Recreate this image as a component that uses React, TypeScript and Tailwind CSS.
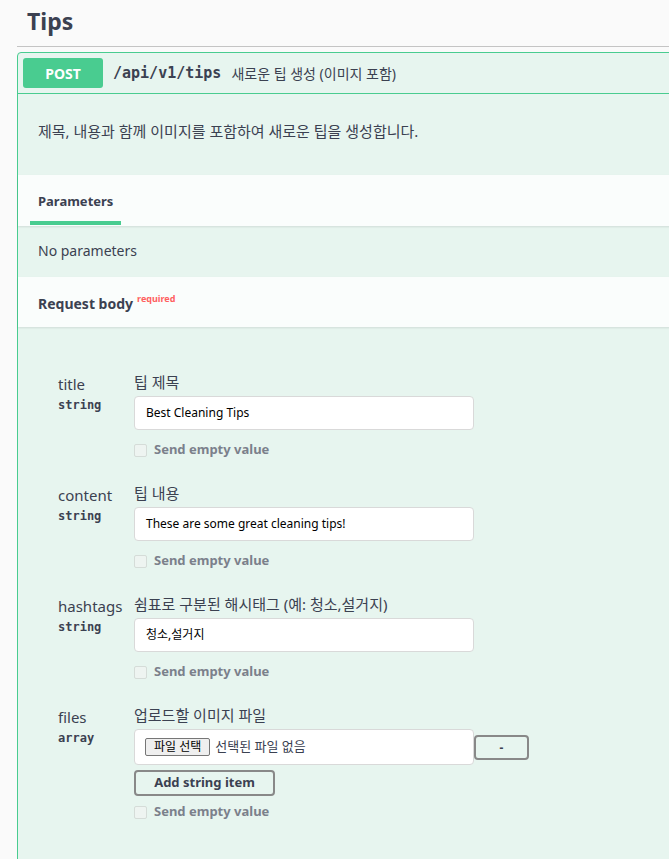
import React from 'react';

const sans = { fontFamily: '"Noto Sans", "Noto Sans CJK KR", sans-serif' };

type Field = {
  name: string;
  type: string;
  label: string;
  value?: string;
  file?: boolean;
};

const fields: Field[] = [
  { name: 'title', type: 'string', label: '팁 제목', value: 'Best Cleaning Tips' },
  { name: 'content', type: 'string', label: '팁 내용', value: 'These are some great cleaning tips!' },
  { name: 'hashtags', type: 'string', label: '쉼표로 구분된 해시태그 (예: 청소,설거지)', value: '청소,설거지' },
  { name: 'files', type: 'array', label: '업로드할 이미지 파일', file: true },
];

function SendEmpty() {
  return (
    <div className="flex items-center h-5 mt-[10px]">
      <span className="w-[13px] h-[13px] rounded-[2px] border border-[#d5dcd8] bg-[#eef4f1]" />
      <span className="ml-[7px] text-[13px] font-bold text-[#7b808b]">Send empty value</span>
    </div>
  );
}

function ParamRow({ f }: { f: Field }) {
  return (
    <div className="flex">
      <div className="w-[76px] pl-[40px] box-content">
        <div className="text-[15px] leading-5 text-[#3b4151]">{f.name}</div>
        <div className="mt-[3px] text-[12px] leading-4 font-bold text-[#3b4151]" style={{ fontFamily: '"DejaVu Sans Mono", monospace' }}>
          {f.type}
        </div>
      </div>
      <div className="flex flex-col">
        <div className="text-[15px] leading-5 text-[#3b4151] -mt-[2px]">{f.label}</div>
        {f.file ? (
          <>
            <div className="flex items-start mt-[4px]">
              <div className="w-[340px] h-[36px] bg-white border border-[#d9d9d9] rounded-[4px] flex items-center pl-[10px]">
                <span className="h-[18px] px-[8px] flex items-center text-[12px] text-black bg-[#efefef] border border-[#767676] rounded-[2px]">
                  파일 선택
                </span>
                <span className="ml-[5px] text-[13px] text-[#3b4151]">선택된 파일 없음</span>
              </div>
              <button className="mt-[6px] w-[55px] h-[25px] border-2 border-[#888] rounded-[4px] text-[12px] font-bold text-[#3b4151] leading-none">
                -
              </button>
            </div>
            <button className="mt-[5px] w-[141px] h-[26px] border-2 border-[#888] rounded-[4px] text-[13px] font-bold text-[#3b4151]">
              Add string item
            </button>
            <div className="-mt-[4px]">
              <SendEmpty />
            </div>
          </>
        ) : (
          <>
            <div className="mt-[4px] w-[340px] h-[34px] bg-white border border-[#d9d9d9] rounded-[4px] flex items-center pl-[11px] text-[12px] text-black">
              {f.value}
            </div>
            <SendEmpty />
          </>
        )}
      </div>
    </div>
  );
}

export default function App() {
  return (
    <div className="w-[669px] h-[859px] overflow-hidden bg-[#fafafa]" style={sans}>
      <div className="ml-[17px] w-[900px]">
        {/* Tag header */}
        <div className="h-[47px] border-b border-[#c4c4c4] pl-[10px] flex items-center">
          <h2 className="text-[23px] font-bold text-[#3b4151] -mt-[3px]">Tips</h2>
        </div>

        {/* Operation block */}
        <div className="mt-[5px] border border-[#49cc90] rounded-[4px] bg-[#e7f5ef] h-[900px]">
          <div className="h-[41px] border-b border-[#49cc90] flex items-center pl-[5px]">
            <span className="w-[80px] h-[30px] rounded-[3px] bg-[#49cc90] text-white text-[14px] font-bold flex items-center justify-center">
              POST
            </span>
            <span
              className="ml-[10px] text-[15px] font-bold text-[#3b4151]"
              style={{ fontFamily: '"DejaVu Sans Mono", monospace' }}
            >
              /api/v1/tips
            </span>
            <span className="ml-[10px] text-[14px] text-[#3b4151]">새로운 팁 생성 (이미지 포함)</span>
          </div>

          <div className="h-[81px] pl-[20px] flex items-center">
            <p className="text-[15px] text-[#3b4151] -mt-[6px]">제목, 내용과 함께 이미지를 포함하여 새로운 팁을 생성합니다.</p>
          </div>

          <div className="h-[51px] bg-[#fafdfc] shadow-[0_1px_2px_rgba(0,0,0,0.1)] flex items-end pl-[12px]">
            <div className="w-[91px] h-[51px] flex flex-col">
              <div className="flex-1 flex items-center pl-[8px] pt-[8px] text-[13px] font-bold text-[#3b4151]">Parameters</div>
              <div className="h-[4px] bg-[#49cc90] mb-[1px]" />
            </div>
          </div>

          <div className="h-[51px] pl-[20px] flex items-center">
            <span className="text-[14px] text-[#3b4151] -mt-[3px]">No parameters</span>
          </div>

          <div className="h-[50px] bg-[#fafdfc] shadow-[0_1px_2px_rgba(0,0,0,0.1)] pl-[20px] flex items-center">
            <span className="text-[14px] font-bold text-[#3b4151] mt-[3px]">Request body</span>
            <span className="ml-[4px] -mt-[6px] text-[9px] font-bold text-[#ff6060]">required</span>
          </div>

          <div className="pt-[47px] flex flex-col gap-[25px]">
            {fields.map((f) => (
              <ParamRow key={f.name} f={f} />
            ))}
          </div>
        </div>
      </div>
    </div>
  );
}
